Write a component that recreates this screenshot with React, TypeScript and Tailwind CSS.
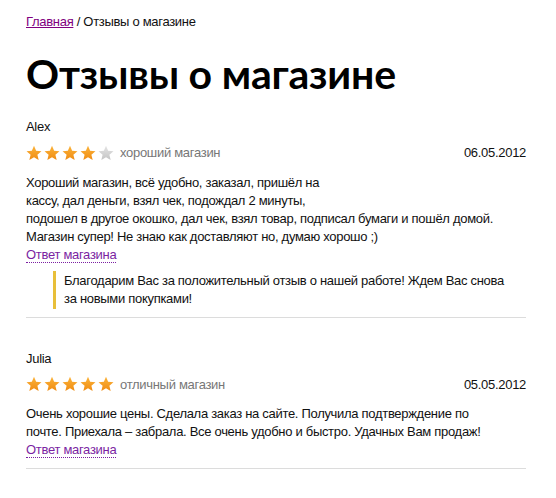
import React from "react";

function Star({ on }: { on: boolean }) {
  return (
    <svg width="16" height="16" viewBox="0 0 24 24" className="block">
      <defs>
        <linearGradient id="go" x1="0" y1="0" x2="0" y2="1">
          <stop offset="0" stopColor="#fbb33a" />
          <stop offset="1" stopColor="#f08c12" />
        </linearGradient>
        <linearGradient id="gg" x1="0" y1="0" x2="0" y2="1">
          <stop offset="0" stopColor="#e4e4e4" />
          <stop offset="1" stopColor="#c4c4c4" />
        </linearGradient>
      </defs>
      <path
        d="M12 1.2l3.2 7.4 8 .7-6.1 5.3 1.9 7.9L12 18.3l-7 4.2 1.9-7.9L.8 9.3l8-.7z"
        fill={on ? "url(#go)" : "url(#gg)"}
      />
    </svg>
  );
}

function Stars({ n }: { n: number }) {
  return (
    <div className="flex gap-[2px]">
      {[0, 1, 2, 3, 4].map((i) => (
        <Star key={i} on={i < n} />
      ))}
    </div>
  );
}

function Review({
  name,
  rating,
  label,
  date,
  children,
  answer,
}: {
  name: string;
  rating: number;
  label: string;
  date: string;
  children: React.ReactNode;
  answer?: React.ReactNode;
}) {
  return (
    <div className="border-b border-[#dcdcdc]">
      <div className="leading-[18px]">{name}</div>
      <div className="mt-[7px] flex items-center justify-between">
        <div className="flex items-center gap-[6px]">
          <Stars n={rating} />
          <span className="text-[#777]">{label}</span>
        </div>
        <span>{date}</span>
      </div>
      <div className="mt-[11px] leading-[18px]">{children}</div>
      <div className="leading-[18px]">
        <span className="text-[#7b1fa2] border-b border-dotted border-[#7b1fa2]">
          Ответ магазина
        </span>
      </div>
      {answer ? (
        <div className="mt-[7px] mb-[8px] ml-[27px] border-l-[3px] border-[#e8bf3a] pl-[8px] py-[1px] leading-[18px]">
          {answer}
        </div>
      ) : (
        <div className="h-[9px]" />
      )}
    </div>
  );
}

export default function App() {
  return (
    <div
      className="min-h-[498px] w-[556px] bg-white pl-[26px] pr-[30px] pt-[14px] text-[13px] tracking-[-0.3px] text-[#111]"
      style={{ fontFamily: '"Liberation Sans", Arial, sans-serif' }}
    >
      <div className="leading-[16px]">
        <span className="text-[#800080] underline">Главная</span> / Отзывы о магазине
      </div>
      <h1
        className="mt-[20px] text-[41px] font-bold leading-[48px] tracking-[-0.2px] text-black"
        style={{ fontFamily: 'Lato, "Noto Sans", sans-serif' }}
      >
        Отзывы о магазине
      </h1>
      <div className="mt-[20px]">
        <Review
          name="Alex"
          rating={4}
          label="хороший магазин"
          date="06.05.2012"
          answer={
            <>
              Благодарим Вас за положительный отзыв о нашей работе! Ждем Вас снова
              <br />
              за новыми покупками!
            </>
          }
        >
          Хороший магазин, всё удобно, заказал, пришёл на
          <br />
          кассу, дал деньги, взял чек, подождал 2 минуты,
          <br />
          подошел в другое окошко, дал чек, взял товар, подписал бумаги и пошёл домой.
          <br />
          Магазин супер! Не знаю как доставляют но, думаю хорошо ;)
        </Review>
        <div className="mt-[32px]">
          <Review name="Julia" rating={5} label="отличный магазин" date="05.05.2012">
            Очень хорошие цены. Сделала заказ на сайте. Получила подтверждение по
            <br />
            почте. Приехала – забрала. Все очень удобно и быстро. Удачных Вам продаж!
          </Review>
        </div>
      </div>
    </div>
  );
}
